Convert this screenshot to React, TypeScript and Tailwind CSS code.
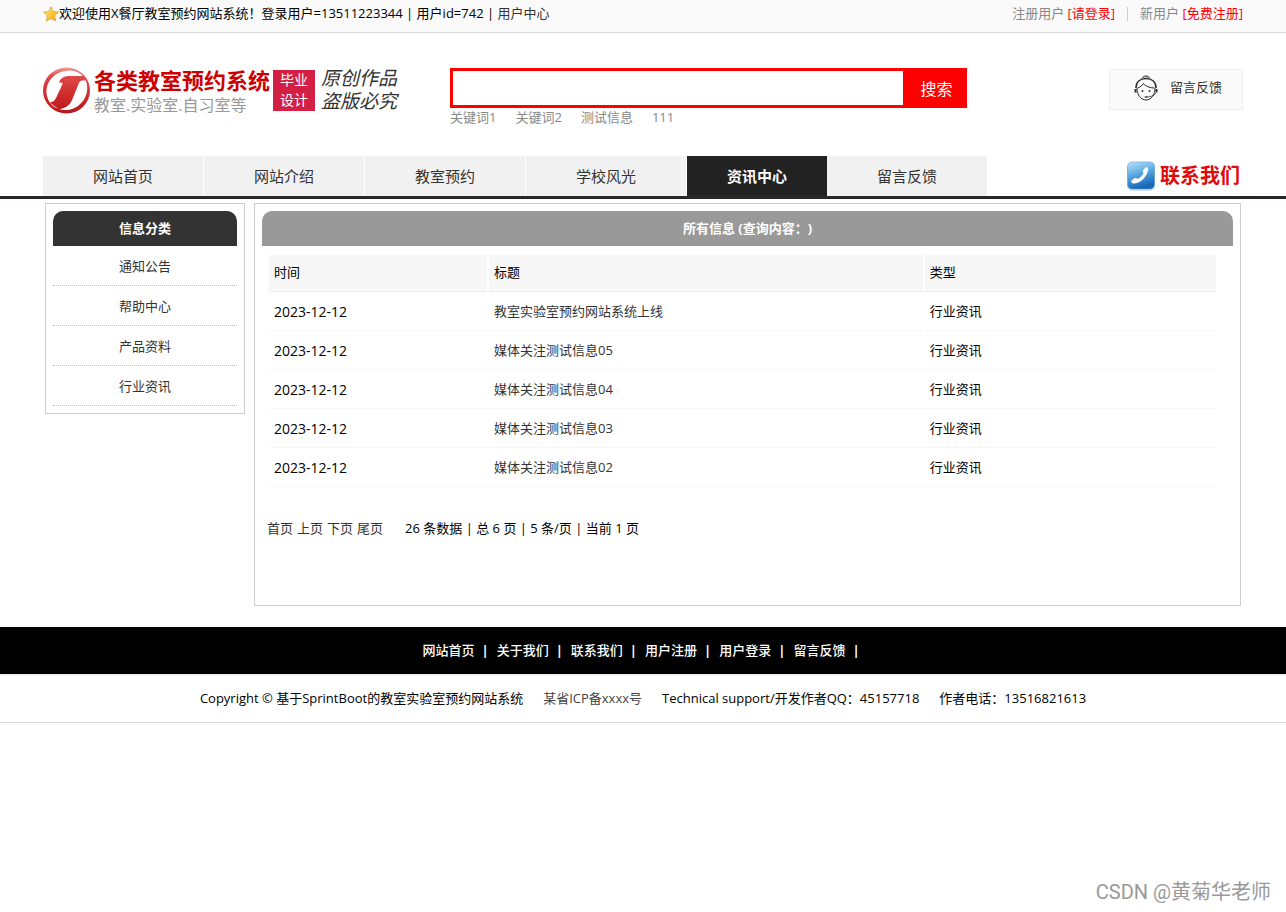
import React, { useState } from "react";

type NewsItem = {
    date: string;
    title: string;
    type: string;
};

const menus = ["网站首页", "网站介绍", "教室预约", "学校风光", "资讯中心", "留言反馈"];
const keywords = ["关键词1", "关键词2", "测试信息", "111"];
const categories = ["通知公告", "帮助中心", "产品资料", "行业资讯"];
const footerLinks = ["网站首页", "关于我们", "联系我们", "用户注册", "用户登录", "留言反馈"];
const pagers = ["首页", "上页", "下页", "尾页"];

const news: NewsItem[] = [
    { date: "2023-12-12", title: "教室实验室预约网站系统上线", type: "行业资讯" },
    { date: "2023-12-12", title: "媒体关注测试信息05", type: "行业资讯" },
    { date: "2023-12-12", title: "媒体关注测试信息04", type: "行业资讯" },
    { date: "2023-12-12", title: "媒体关注测试信息03", type: "行业资讯" },
    { date: "2023-12-12", title: "媒体关注测试信息02", type: "行业资讯" },
];

function StarIcon() {
    return (
        <svg width="16" height="16" viewBox="0 0 16 16" aria-hidden="true">
            <defs>
                <linearGradient id="star" x1="0" y1="0" x2="1" y2="1">
                    <stop offset="0" stopColor="#fff09a" />
                    <stop offset="0.5" stopColor="#fdc93a" />
                    <stop offset="1" stopColor="#ee9f1c" />
                </linearGradient>
            </defs>
            <path d="M8 0.7 10.2 5.5 15.5 6.1 11.6 9.7 12.7 15 8 12.4 3.3 15 4.4 9.7 0.5 6.1 5.8 5.5Z"
                fill="url(#star)" stroke="#d9a13c" strokeWidth="0.8" strokeLinejoin="round" />
        </svg>
    );
}

function LogoMark() {
    return (
        <svg width="48" height="47" viewBox="0 0 48 47" aria-hidden="true">
            <defs>
                <linearGradient id="ring" gradientUnits="userSpaceOnUse" x1="0" y1="0" x2="0" y2="47">
                    <stop offset="0" stopColor="#f0a09c" />
                    <stop offset="0.2" stopColor="#dd4a48" />
                    <stop offset="0.6" stopColor="#cf2a2c" />
                    <stop offset="1" stopColor="#b3191b" />
                </linearGradient>
            </defs>
            <ellipse cx="23.5" cy="23.5" rx="23.500" ry="23" fill="url(#ring)" />
            <path d="M4 29C1 15 12 4 26 3.500C36 3.500 43 9 44 18C46 31 36 42 24 43C13 43.500 6 38 4 29Z" fill="#fff" />
            <path d="M16 15.500C17 12 20 9.500 25 9H40.500L43 13.500H38.500C37 14 36.500 15 36 16L29 33C27 38 23 41 16 42.500L6.500 35.500C10 35 12 33.500 13.500 30L19.500 17C20 16 19 15.500 16 15.500Z"
                fill="url(#ring)" />
        </svg>
    );
}

function ServiceIcon() {
    return (
        <svg width="24" height="26" viewBox="0 0 24 26" fill="none" stroke="#2e2e2e" strokeWidth="1" aria-hidden="true">
            <path d="M8.500 3C9 0.300 15 0.300 15.500 3" fill="#ccc" />
            <path d="M2 13C2 7 6 3.500 12 3.500S22 7 22 13" strokeWidth="1.600" />
            <path d="M3 13C3 20 7 25 12 25S21 20 21 13" />
            <path d="M3.500 13C7 12 8.500 10 9 8.500C12 11.500 16 13 20.500 13" />
            <path d="M1.500 14V17.500M22.500 14V17.500" strokeWidth="2" />
            <path d="M22 18C20 21 16 22 12.500 22" strokeWidth="0.800" />
            <circle cx="8.500" cy="16" r="1" fill="#2e2e2e" stroke="none" />
            <circle cx="15.500" cy="16" r="1" fill="#2e2e2e" stroke="none" />
            <ellipse cx="12" cy="22" rx="1.600" ry="0.800" fill="#2e2e2e" stroke="none" />
        </svg>
    );
}

function PhoneIcon() {
    return (
        <svg width="30" height="30" viewBox="0 0 30 30" aria-hidden="true">
            <defs>
                <linearGradient id="phone" x1="0" y1="0" x2="0.3" y2="1">
                    <stop offset="0" stopColor="#bfe3f8" />
                    <stop offset="0.5" stopColor="#58a9e2" />
                    <stop offset="1" stopColor="#1767b8" />
                </linearGradient>
            </defs>
            <rect x="1" y="2" width="28" height="28" rx="5" fill="#d5e3f2" />
            <rect x="1.500" y="1" width="27" height="27" rx="4.500" fill="url(#phone)" stroke="#5e9fd2" strokeWidth="0.6" />
            <path d="M18.500 7.500C20.500 5.300 22.300 6.200 22.300 8.500C21 15.500 15 22 8.500 22.500C6 22.700 4.500 21 5.800 19.300L8.500 17.300C9.700 16.500 10.800 17.400 11.500 18C14 16.800 16.500 14.500 17.700 12C16.700 11.300 16.500 10.300 17 9.500Z"
                fill="#fff" />
        </svg>
    );
}

function TopBar() {
    return (
        <div className="border-b border-[#d9d9d9] bg-[#fafafa]">
            <div className="mx-auto flex h-8 max-w-[1200px] items-center justify-between pb-1">
                <div className="flex items-center text-black">
                    <StarIcon />
                    <span>欢迎使用X餐厅教室预约网站系统！登录用户=13511223344 | 用户id=742 | <a href="#" className="text-[#333]">用户中心</a></span>
                </div>
                <div className="flex items-center text-[#888]">
                    <span>注册用户 <a href="#" className="text-[#f00]">[请登录]</a></span>
                    <span className="mx-3 h-3.5 w-px bg-[#ccc]" />
                    <span>新用户 <a href="#" className="text-[#f00]">[免费注册]</a></span>
                </div>
            </div>
        </div>
    );
}

function Header() {
    const [keyword, setKeyword] = useState<string>("");

    return (
        <header className="mx-auto flex h-[123px] w-full max-w-[1200px] items-start pt-[34px]">
            <div className="flex w-[407px] shrink-0 items-start">
                <LogoMark />
                <div className="ml-[3px]">
                    <h1 className="text-[22px] leading-[26px] font-bold text-[#c00]">各类教室预约系统</h1>
                    <p className="text-base leading-6 text-[#999]">教室.实验室.自习室等</p>
                </div>
                <div className="mt-[3px] ml-[3px] flex h-[41px] w-[42px] flex-col items-center justify-center bg-[#d41f45] pb-0.5 text-sm leading-5 text-white">
                    <span>毕业</span>
                    <span>设计</span>
                </div>
                <div className="ml-1.5 text-[19px] leading-[23px] text-[#333] italic">
                    <p>原创作品</p>
                    <p>盗版必究</p>
                </div>
            </div>
            <div className="mt-px">
                <form className="flex" onSubmit={(e) => e.preventDefault()}>
                    <input type="text" aria-label="搜索" value={keyword}
                        onChange={(e) => setKeyword(e.target.value)}
                        className="h-10 w-[456px] border-[3px] border-[#f00] bg-white px-2 outline-none" />
                    <button type="submit" className="h-10 w-[61px] bg-[#f00] pt-0.5 text-base text-white">搜索</button>
                </form>
                <div className="flex gap-[19px] leading-[18px] text-[#888]">
                    {keywords.map((item) => <a href="#" key={item}>{item}</a>)}
                </div>
            </div>
            <a href="#" className="mt-0.5 ml-auto flex h-[41px] w-[134px] items-center justify-center gap-3 border border-[#eee] bg-[#fafafa] pb-[3px] pl-1 text-[#333]">
                <ServiceIcon />
                <span>留言反馈</span>
            </a>
        </header>
    );
}

function Nav() {
    return (
        <nav className="border-b-[3px] border-[#2a2626]">
            <div className="mx-auto flex h-10 max-w-[1200px] items-center">
                {menus.map((item, index) => (
                    <a href="#" key={item}
                        className={item === "资讯中心"
                            ? "w-[140px] bg-[#222] text-center text-[15px] leading-10 font-bold text-white"
                            : `w-40 bg-[#f1f1f1] text-center text-[15px] leading-10 text-[#333] ${index < 4 ? "mr-px" : ""}`}>
                        {item}
                    </a>
                ))}
                <a href="#" className="mr-[3px] ml-auto flex items-center gap-1 text-xl font-bold text-[#e00b0b]">
                    <PhoneIcon />
                    联系我们
                </a>
            </div>
        </nav>
    );
}

function Sidebar() {
    return (
        <aside className="w-[200px] shrink-0 border border-[#ccc] p-[7px] text-center">
            <h2 className="rounded-t-[10px] bg-[#333] leading-[35px] font-bold text-white">信息分类</h2>
            <ul>
                {categories.map((item) => (
                    <li key={item} className="h-10 border-b border-dotted border-[#bbb] leading-10">
                        <a href="#" className="text-[#333]">{item}</a>
                    </li>
                ))}
            </ul>
        </aside>
    );
}

function NewsList() {
    return (
        <section className="min-h-[403px] flex-1 border border-[#ccc] p-[7px]">
            <h2 className="rounded-t-[10px] bg-[#999] text-center leading-[35px] font-bold text-white [text-spacing-trim:space-all]">所有信息 (查询内容：)</h2>
            <div className="mt-[7px] mr-[15px] ml-[5px]">
                <table className="w-full table-fixed border-separate border-spacing-[2px] text-left text-black">
                    <thead>
                        <tr>
                            {["时间", "标题", "类型"].map((item, index) => (
                                <th key={item}
                                    className={`h-[37px] border-b border-dotted border-[#e5e5e5] bg-[#f7f7f7] px-[5px] font-normal ${index === 0 ? "w-[218px]" : index === 1 ? "w-[46%]" : ""}`}>
                                    {item}
                                </th>
                            ))}
                        </tr>
                    </thead>
                    <tbody>
                        {news.map((item) => (
                            <tr key={item.title}>
                                <td className="h-[37px] border-b border-dotted border-[#eee] px-[5px] text-sm">{item.date}</td>
                                <td className="h-[37px] border-b border-dotted border-[#eee] px-[5px]">
                                    <a href="#" className="text-[#333]">{item.title}</a>
                                </td>
                                <td className="h-[37px] border-b border-dotted border-[#eee] px-[5px]">{item.type}</td>
                            </tr>
                        ))}
                    </tbody>
                </table>
                <div className="mt-[27px] flex gap-1 leading-6 text-black">
                    {pagers.map((item) => <a href="#" key={item} className="text-[#333]">{item}</a>)}
                    <span className="ml-[18px]">26 条数据 | 总 6 页 | 5 条/页 | 当前 1 页</span>
                </div>
            </div>
        </section>
    );
}

function Footer() {
    return (
        <footer className="mt-[21px] border-b border-[#d9d9d9]">
            <div className="flex h-[47px] items-center justify-center gap-2 bg-black pr-1 font-medium text-white">
                {footerLinks.map((item) => (
                    <span key={item} className="flex gap-[7px]"><a href="#">{item}</a><b>|</b></span>
                ))}
            </div>
            <div className="flex h-12 items-center justify-center gap-5 border-t border-[#e5e5e5] text-black">
                <span>Copyright © 基于SprintBoot的教室实验室预约网站系统</span>
                <a href="#" className="text-[#444]">某省ICP备xxxx号</a>
                <span>Technical support/开发作者QQ：45157718</span>
                <span>作者电话：13516821613</span>
            </div>
        </footer>
    );
}

export default function App() {
    return (
        <div className="flex min-h-screen flex-col bg-white font-['Open_Sans','Noto_Sans_CJK_SC',sans-serif] text-[13px]">
            <TopBar />
            <Header />
            <Nav />
            <main className="mx-auto mt-1 flex w-full max-w-[1200px] items-start gap-[9px] px-0.5">
                <Sidebar />
                <NewsList />
            </main>
            <Footer />
            <p className="mt-auto mr-[15px] self-end pb-1.5 font-[Roboto,'Noto_Sans_CJK_SC',sans-serif] text-xl text-[#999]">CSDN @黄菊华老师</p>
        </div>
    );
}
